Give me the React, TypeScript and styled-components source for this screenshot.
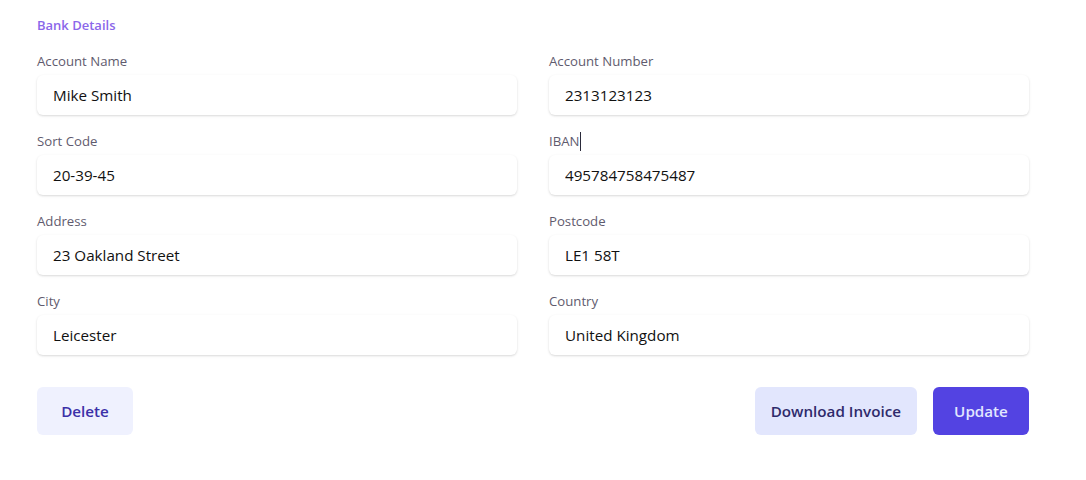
import React from 'react';
import styled, { createGlobalStyle } from 'styled-components';

const GlobalStyle = createGlobalStyle`
  html, body {
    margin: 0;
    padding: 0;
    background: #ffffff;
  }
  body {
    font-family: 'Open Sans', 'Noto Sans', sans-serif;
    color: #111827;
  }
  * {
    box-sizing: border-box;
  }
`;

const Page = styled.div`
  width: 1086px;
  height: 480px;
  padding: 15px 57px 0 37px;
`;

const SectionTitle = styled.h3`
  margin: 0 0 16px;
  font-size: 13px;
  line-height: 20px;
  font-weight: 600;
  color: #8b67ea;
`;

const FieldGrid = styled.div`
  display: grid;
  grid-template-columns: 480px 480px;
  column-gap: 32px;
  row-gap: 16px;
`;

const Field = styled.div`
  display: flex;
  flex-direction: column;
`;

const Label = styled.label`
  display: flex;
  align-items: center;
  font-size: 13.2px;
  line-height: 20px;
  color: #5f5b6e;
  margin-bottom: 4px;
`;

const Caret = styled.span`
  display: inline-block;
  width: 1px;
  height: 19px;
  margin-left: 1px;
  background: #2a2a3a;
`;

const Input = styled.input`
  height: 40px;
  width: 100%;
  padding: 0 16px;
  border: none;
  border-radius: 6px;
  background: #ffffff;
  box-shadow: 0 1px 3px rgba(0, 0, 0, 0.1), 0 1px 2px rgba(0, 0, 0, 0.06);
  font-family: inherit;
  font-size: 15.2px;
  color: #111111;
  outline: none;
`;

const Actions = styled.div`
  display: flex;
  align-items: center;
  gap: 16px;
  margin-top: 32px;
  width: 992px;
`;

const Spacer = styled.div`
  flex: 1;
`;

const Button = styled.button<{ $variant: 'light' | 'soft' | 'primary' }>`
  height: 48px;
  min-width: 96px;
  padding: 0 16px;
  border: none;
  border-radius: 6px;
  font-family: inherit;
  font-size: 15.2px;
  font-weight: 600;
  cursor: pointer;
  background: ${(p) =>
    p.$variant === 'primary' ? '#5343e2' : p.$variant === 'soft' ? '#e2e6fd' : '#eff1fe'};
  color: ${(p) =>
    p.$variant === 'primary' ? '#e2e6ff' : p.$variant === 'soft' ? '#2e2a6b' : '#3b30a8'};
`;

const fields = [
  { label: 'Account Name', value: 'Mike Smith' },
  { label: 'Account Number', value: '2313123123' },
  { label: 'Sort Code', value: '20-39-45' },
  { label: 'IBAN', value: '495784758475487', caret: true },
  { label: 'Address', value: '23 Oakland Street' },
  { label: 'Postcode', value: 'LE1 58T' },
  { label: 'City', value: 'Leicester' },
  { label: 'Country', value: 'United Kingdom' },
];

export default function App() {
  return (
    <>
      <GlobalStyle />
      <Page>
        <SectionTitle>Bank Details</SectionTitle>
        <FieldGrid>
          {fields.map((f) => (
            <Field key={f.label}>
              <Label>
                {f.label}
                {f.caret && <Caret />}
              </Label>
              <Input defaultValue={f.value} />
            </Field>
          ))}
        </FieldGrid>
        <Actions>
          <Button $variant="light">Delete</Button>
          <Spacer />
          <Button $variant="soft">Download Invoice</Button>
          <Button $variant="primary">Update</Button>
        </Actions>
      </Page>
    </>
  );
}
